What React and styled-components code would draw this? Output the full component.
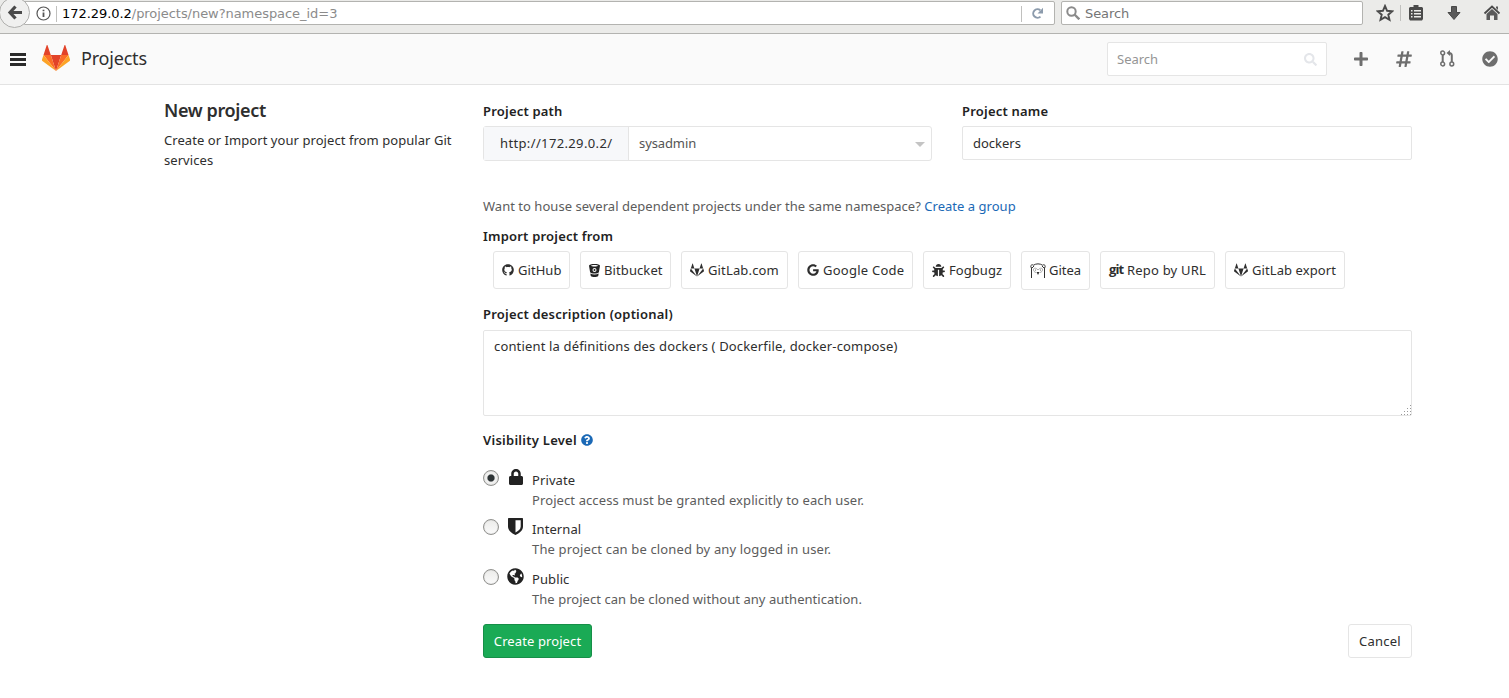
import React from 'react';
import styled, { createGlobalStyle } from 'styled-components';
import { FaGithub, FaGitlab, FaGoogle, FaBug, FaGlobeAmericas, FaLock, FaPlus, FaHashtag, FaSearch, FaCheckCircle, FaQuestionCircle } from 'react-icons/fa';

const Global = createGlobalStyle`
  * { box-sizing: border-box; }
  body { margin: 0; background: #fff; color: #2e2e2e; font: 13px/20px "Noto Sans", "Open Sans", sans-serif; overflow: hidden; }
  input, textarea, button { font: inherit; color: inherit; margin: 0; }
  svg { display: block; flex: none; }
`;

const Tracked = styled.span`
  letter-spacing: ${p => p.$ls || 0}px;
  white-space: nowrap;
`;

/* Browser toolbar */
const Chrome = styled.div`
  display: flex;
  align-items: flex-start;
  height: 34px;
  background: #ebebe9;
  border-bottom: 1px solid #b3b3b0;
  padding-top: 1px;
  font-family: "DejaVu Sans", sans-serif;
`;
const BackButton = styled.div`
  width: 31px;
  height: 31px;
  margin: -4px -6px 0 -1px;
  border: 1px solid #b0b0ae;
  border-radius: 50%;
  background: #f0f0ef;
  display: flex;
  align-items: center;
  justify-content: center;
  position: relative;
  z-index: 1;
`;
const UrlField = styled.div`
  width: 1031px;
  height: 24px;
  display: flex;
  align-items: center;
  background: #fff;
  border: 1px solid #b3b3b0;
  border-radius: 0 2px 2px 0;
  padding: 1px 0 0 11px;
  color: #8b8b8b;
`;
const Host = styled.b`
  font-weight: 400;
  color: #000;
`;
const Divider = styled.i`
  width: 1px;
  height: 16px;
  background: #c0c0be;
  margin: ${p => p.$m || 0};
`;
const Reload = styled.div`
  margin-left: auto;
  display: flex;
  align-items: center;
  width: 33px;
  gap: 9px;
`;
const ChromeSearch = styled.div`
  width: 302px;
  height: 24px;
  margin-left: 6px;
  display: flex;
  align-items: center;
  gap: 5px;
  padding: 1px 0 0 4px;
  background: #fff;
  border: 1px solid #b3b3b0;
  border-radius: 2px;
  color: #757575;
  svg { margin-top: -2px; }
`;
const ChromeTools = styled.div`
  display: flex;
  align-items: center;
  height: 24px;
  margin-left: 13px;
`;
const Tool = styled.svg`
  width: 18px;
  height: 18px;
  margin-right: ${p => p.$gap || 0}px;
`;

/* Application header */
const Header = styled.header`
  height: 51px;
  display: flex;
  align-items: center;
  background: #fafafa;
  border-bottom: 1px solid #e3e3e3;
  padding: 0 11px 0 10px;
`;
const Burger = styled.div`
  width: 16px;
  display: grid;
  gap: 2px;
  margin: 0 16px 0 0;
  i { height: 3px; background: #2a2a2a; }
`;
const Brand = styled.svg`
  width: 28px;
  height: 26px;
  margin-bottom: 3px;
`;
const Title = styled.h1`
  margin: 0 auto 2px 11px;
  font: 400 18px/48px "Noto Sans", sans-serif;
  letter-spacing: -0.2px;
`;
const HeaderSearch = styled.div`
  width: 220px;
  height: 34px;
  display: flex;
  align-items: center;
  justify-content: space-between;
  padding: 0 9px;
  background: #fff;
  border: 1px solid #e5e5e5;
  border-radius: 2px;
  color: #959595;
  svg { color: #e4e6ea; }
`;
const HeaderIcons = styled.nav`
  display: flex;
  align-items: center;
  justify-content: space-between;
  width: 145px;
  margin: 0 0 1px 26px;
  color: #6e6e6e;
`;

/* Form */
const Page = styled.main`
  display: flex;
  padding: 17px 97px 0 164px;
`;
const Aside = styled.aside`
  width: 319px;
`;
const Heading = styled.h4`
  margin: -4px 0 8px;
  font: 600 18px/24px "Noto Sans", sans-serif;
  letter-spacing: -0.36px;
`;
const Form = styled.div`
  width: 929px;
`;
const Columns = styled.div`
  display: grid;
  grid-template-columns: 449px 450px;
  column-gap: 30px;
`;
const Label = styled.label`
  display: flex;
  align-items: center;
  gap: 4px;
  height: 18px;
  line-height: 18px;
  font-weight: 600;
  letter-spacing: ${p => p.$ls || 0.2}px;
  color: #222;
`;
const Group = styled.div`
  display: flex;
  width: 449px;
  height: 35px;
  margin-top: 6px;
  border: 1px solid #e5e5e5;
  border-radius: 3px;
`;
const Prefix = styled.div`
  width: 145px;
  padding-left: 16px;
  line-height: 33px;
  background: #f7f8fa;
  border-right: 1px solid #e5e5e5;
`;
const Namespace = styled.div`
  flex: 1;
  display: flex;
  justify-content: space-between;
  padding: 0 6px 0 10px;
  line-height: 33px;
  letter-spacing: -0.1px;
  color: #555;
  svg { margin-top: 15px; }
`;
const NameInput = styled.input`
  width: 450px;
  height: 34px;
  margin-top: 6px;
  padding: 0 10px;
  border: 1px solid #e5e5e5;
  border-radius: 2px;
  outline: 0;
`;
const Hint = styled.p`
  margin: 36px 0 12px;
  line-height: 18px;
  color: #5c5c5c;
  a { color: #1b69b6; }
`;
const Imports = styled.div`
  display: flex;
  align-items: flex-start;
  gap: 10px;
  height: 38px;
  margin: 6px 0 16px 10px;
`;
const ImportButton = styled.button`
  width: ${p => p.$w}px;
  height: ${p => p.$h || 38}px;
  flex: none;
  display: flex;
  align-items: ${p => (p.$h ? 'flex-start' : 'center')};
  gap: ${p => p.$gap || 4}px;
  padding: ${p => (p.$h ? 8 : 0)}px 0 0 8px;
  background: #fff;
  border: 1px solid #e5e5e5;
  border-radius: 3px;
`;
const GiteaMark = styled.svg`
  width: 16px;
  height: 16px;
  margin-top: 3px;
`;
const GitWord = styled.b`
  font: 700 13px/14px "Open Sans", sans-serif;
  letter-spacing: -0.9px;
  width: 14px;
  margin: -3px 0 0;
  text-align: left;
`;
const Description = styled.textarea`
  display: block;
  width: 929px;
  height: 86px;
  margin: 7px 0 15px;
  padding: 5px 10px;
  border: 1px solid #e5e5e5;
  border-radius: 2px;
  outline: 0;
  resize: none;
  letter-spacing: 0.155px;
`;
const DescriptionWrap = styled.div`
  position: relative;
`;
const Grip = styled.svg`
  position: absolute;
  right: 1px;
  bottom: 1px;
`;
const Levels = styled.div`
  display: grid;
  grid-template-rows: 49px 50px 40px;
  margin-top: 21px;
`;
const Level = styled.div`
  display: grid;
  grid-template-columns: 24px 25px 1fr;
  grid-template-rows: 20px 20px;
`;
const Radio = styled.input`
  appearance: none;
  width: 16px;
  height: 16px;
  border: 1px solid #92928f;
  border-radius: 50%;
  background: linear-gradient(#ececea, #fafafa);
  box-shadow: inset 0 0 1px #aaa;
  &:checked { background: radial-gradient(circle, #2e3436 0 3px, #f0f0ef 4.2px); }
`;
const LevelIcon = styled.span`
  width: 17px;
  height: 18px;
  margin-top: -2px;
  display: flex;
  align-items: center;
  justify-content: center;
  color: #222;
`;
const LevelNote = styled.div`
  grid-column: 3;
  color: #5c5c5c;
`;
const Actions = styled.div`
  display: flex;
  justify-content: space-between;
  margin-top: 15px;
`;
const Action = styled.button`
  width: ${p => p.$w}px;
  height: 34px;
  padding: 0;
  border: 1px solid ${p => (p.$primary ? '#168f48' : '#e5e5e5')};
  border-radius: 3px;
  background: ${p => (p.$primary ? '#1aaa55' : '#fff')};
  color: ${p => (p.$primary ? '#fff' : '#2e2e2e')};
`;

const Tanuki = () => (
  <Brand viewBox="0 0 28 26">
    <path fill="#e24329" d="M14 26 8.8 10h10.4z" />
    <path fill="#fc6d26" d="M14 26 8.8 10H1.5zM14 26l5.2-16h7.3z" />
    <path fill="#fca326" d="M1.5 10 0 14.6c-.2.5 0 1 .4 1.3L14 26zM26.5 10l1.5 4.6c.2.5 0 1-.4 1.3L14 26z" />
    <path fill="#e24329" d="M1.5 10h7.3L5.6.4c-.2-.5-.8-.5-1 0zM26.5 10h-7.3L22.4.4c.2-.5.8-.5 1 0z" />
  </Brand>
);
const MergeIcon = () => (
  <svg width="16" height="17" viewBox="0 0 16 17" fill="none" stroke="currentColor" strokeWidth="1.5">
    <circle cx="2.7" cy="3" r="1.9" /><circle cx="2.7" cy="14" r="1.9" /><circle cx="11.8" cy="14" r="1.9" />
    <path d="M2.700 5v7M11.800 12V5.500C11.800 3.600 11 3 9 3" strokeWidth="2" />
    <path d="M10 0v6L6.500 3z" fill="currentColor" stroke="none" />
  </svg>
);
const BucketIcon = () => (
  <svg width="11" height="13" viewBox="0 0 11 13">
    <path fill="#222" fillRule="evenodd" d="M0 1.800C0 .6 2.500 0 5.500 0S11 .6 11 1.800L9.900 8.200C9.500 9.100 7.500 9.600 5.500 9.600S1.500 9.100 1.100 8.200zM2 1.700c0 .4 1.600.7 3.500.7S9 2.100 9 1.700 7.400 1 5.500 1 2 1.300 2 1.700zM5.500 4.100a2 2 0 1 0 0 4 2 2 0 0 0 0-4z" />
    <circle cx="5.500" cy="6.100" r="1" fill="#222" />
    <path fill="#222" d="M1.300 9.500c2.400 1.300 6 1.300 8.400 0L9.200 12c-1.200 1.300-6.200 1.300-7.400 0z" />
  </svg>
);
const GiteaIcon = () => (
  <GiteaMark viewBox="0 0 16 16" fill="none" stroke="#333">
    <path d="M1.500 15V4.500M14.500 15V4.500" />
    <path d="M1.500 5C-.2 3 1.500.8 3.500 2.200 6 .4 10 .4 12.500 2.200c2-1.400 3.700.8 2 2.800M2 5l2-2M14 5l-2-2" />
    <path d="M3.500 6c.5-1.500 3-1 4.500 1 1.500-2 4-2.500 4.500-1s-1 3.500-2.500 3.500M3.500 6c-.5 1.500 1 3.500 2.500 3.500" stroke="#999" strokeWidth=".8" />
    <circle cx="5.500" cy="7" r=".6" fill="#555" stroke="none" /><circle cx="10.500" cy="7" r=".6" fill="#555" stroke="none" />
    <path d="M6.500 9h3L8 12z" fill="#333" stroke="none" />
  </GiteaMark>
);
const ShieldIcon = () => (
  <svg width="15" height="17" viewBox="0 0 15 17">
    <path fill="currentColor" fillRule="evenodd" d="M.7 0h13.600q.7 0 .7.7V8.500c0 4-3.500 6.800-7.500 8.500C3.500 15.300 0 12.500 0 8.500V.7Q0 0 .7 0zM7.500 2.200v12.300c2.700-1.400 5.200-3.300 5.200-6V2.200z" />
  </svg>
);

const importers = [
  { name: 'GitHub', w: 77, ls: 0.05, icon: <FaGithub size={12} /> },
  { name: 'Bitbucket', w: 91, ls: 0.1, icon: <BucketIcon /> },
  { name: 'GitLab.com', w: 107, ls: 0.15, icon: <FaGitlab size={14} /> },
  { name: 'Google Code', w: 115, ls: 0.25, icon: <FaGoogle size={12} /> },
  { name: 'Fogbugz', w: 88, ls: 0.05, icon: <FaBug size={13} /> },
  { name: 'Gitea', w: 69, h: 39, ls: 0, gap: 3, icon: <GiteaIcon /> },
  { name: 'Repo by URL', w: 115, ls: 0.2, icon: <GitWord>git</GitWord> },
  { name: 'GitLab export', w: 120, ls: 0.08, icon: <FaGitlab size={14} /> },
];
const levels = [
  { name: 'Private', note: 'Project access must be granted explicitly to each user.', ls: 0.1, icon: <FaLock size={16} /> },
  { name: 'Internal', note: 'The project can be cloned by any logged in user.', ls: 0.15, icon: <ShieldIcon /> },
  { name: 'Public', note: 'The project can be cloned without any authentication.', ls: 0.04, icon: <FaGlobeAmericas size={17} /> },
];

export default function App() {
  return (
    <>
      <Global />
      <Chrome>
        <BackButton>
          <svg width="16" height="15" viewBox="0 0 16 15" fill="none" stroke="#4a4a4a" strokeWidth="3.2"><path d="M8.500 1.500 3 7.500l5.500 6M3 7.500h12" /></svg>
        </BackButton>
        <UrlField>
          <svg width="15" height="15" viewBox="0 0 15 15" fill="none" stroke="#555"><circle cx="7.5" cy="7.5" r="6.5" strokeWidth="1.2" /><path d="M7.500 6.500V11M7.500 3.700v1.600" strokeWidth="1.8" /></svg>
          <Divider $m="0 5px 0 5px" />
          <Tracked $ls={-0.05}><Host>172.29.0.2</Host>/projects/new?namespace_id=3</Tracked>
          <Reload>
            <Divider />
            <svg width="13" height="13" viewBox="0 0 13 13"><path d="M9.500 9.600A4.300 4.300 0 1 1 9.300 3.200" fill="none" stroke="#8c9bac" strokeWidth="2" /><path d="M12 .8v5.700H6.500z" fill="#8c9bac" /></svg>
          </Reload>
        </UrlField>
        <ChromeSearch>
          <svg width="14" height="14" viewBox="0 0 14 14" fill="none" stroke="#8b8b8b"><circle cx="5.5" cy="5.5" r="4.2" strokeWidth="2" /><path d="m8.500 8.500 4.800 4.800" strokeWidth="2.4" /></svg>
          <Tracked $ls={-0.1}>Search</Tracked>
        </ChromeSearch>
        <ChromeTools>
          <Tool $gap={6} viewBox="0 0 18 18"><path d="m9 2 2.100 4.800 5.200.5-4 3.400 1.200 5.100L9 13.100l-4.500 2.700 1.200-5.100-4-3.400 5.200-.5z" fill="none" stroke="#4a4a4a" strokeWidth="1.9" /></Tool>
          <Divider $m="0 6px 0 0" />
          <Tool $gap={20} viewBox="0 0 18 18"><path fill="#4a4a4a" d="M6.500 1h5v2h3.500l1 1v11l-1 1.500H3L2 15V4l1-1h3.500z" /><path stroke="#ebebe9" strokeWidth="1.4" d="M4 6.800h1.500M7 6.800h7M4 9.800h1.500M7 9.800h7M4 12.800h1.500M7 12.800h7" /></Tool>
          <Tool $gap={20} viewBox="0 0 18 18"><path fill="#5a5a5a" stroke="#484848" d="M6.500 2.500h5v6H15l-6 7-6-7h3.500z" /></Tool>
          <Tool viewBox="0 0 18 18"><path fill="none" stroke="#4a4a4a" strokeWidth="1.8" d="m1.500 9.500 7.500-7 7.500 7" /><path fill="#5a5a5a" d="m9 5 5.500 5v6H11v-4.500H7V16H3.500v-6zM13 2.500h2V6l-2-2z" /></Tool>
        </ChromeTools>
      </Chrome>
      <Header>
        <Burger><i /><i /><i /></Burger>
        <Tanuki />
        <Title>Projects</Title>
        <HeaderSearch><Tracked>Search</Tracked><FaSearch size={13} /></HeaderSearch>
        <HeaderIcons>
          <FaPlus size={16} /><FaHashtag size={18} /><MergeIcon /><FaCheckCircle size={16} />
        </HeaderIcons>
      </Header>
      <Page>
        <Aside>
          <Heading>New project</Heading>
          <Tracked $ls={0.06}>Create or Import your project from popular Git<br />services</Tracked>
        </Aside>
        <Form>
          <Columns>
            <div>
              <Label>Project path</Label>
              <Group>
                <Prefix><Tracked $ls={0.36}>http://172.29.0.2/</Tracked></Prefix>
                <Namespace>
                  sysadmin
                  <svg width="10" height="5" viewBox="0 0 10 5"><path fill="#c4c4c4" d="M0 0h10L5 5z" /></svg>
                </Namespace>
              </Group>
            </div>
            <div>
              <Label>Project name</Label>
              <NameInput defaultValue="dockers" />
            </div>
          </Columns>
          <Hint><Tracked $ls={0.025}>Want to house several dependent projects under the same namespace? <a>Create a group</a></Tracked></Hint>
          <Label>Import project from</Label>
          <Imports>
            {importers.map(i => (
              <ImportButton key={i.name} $w={i.w} $h={i.h} $gap={i.gap}>
                {i.icon}<Tracked $ls={i.ls}>{i.name}</Tracked>
              </ImportButton>
            ))}
          </Imports>
          <Label>Project description (optional)</Label>
          <DescriptionWrap>
            <Description defaultValue="contient la définitions des dockers ( Dockerfile, docker-compose)" />
            <Grip width="10" height="10" viewBox="0 0 10 10" stroke="#999" strokeDasharray="1 2">
              <path d="M9 .5h1M6 3.500h4M3 6.500h7M0 9.500h10" />
            </Grip>
          </DescriptionWrap>
          <Label $ls={0.26}>Visibility Level <FaQuestionCircle size={12} color="#1b69b6" /></Label>
          <Levels>
            {levels.map((l, n) => (
              <Level key={l.name}>
                <Radio type="radio" name="level" defaultChecked={n === 0} />
                <LevelIcon>{l.icon}</LevelIcon>
                <Tracked $ls={0.1}>{l.name}</Tracked>
                <LevelNote><Tracked $ls={l.ls}>{l.note}</Tracked></LevelNote>
              </Level>
            ))}
          </Levels>
          <Actions>
            <Action $primary $w={109}><Tracked $ls={0.1}>Create project</Tracked></Action>
            <Action $w={64}><Tracked $ls={0.25}>Cancel</Tracked></Action>
          </Actions>
        </Form>
      </Page>
    </>
  );
}
